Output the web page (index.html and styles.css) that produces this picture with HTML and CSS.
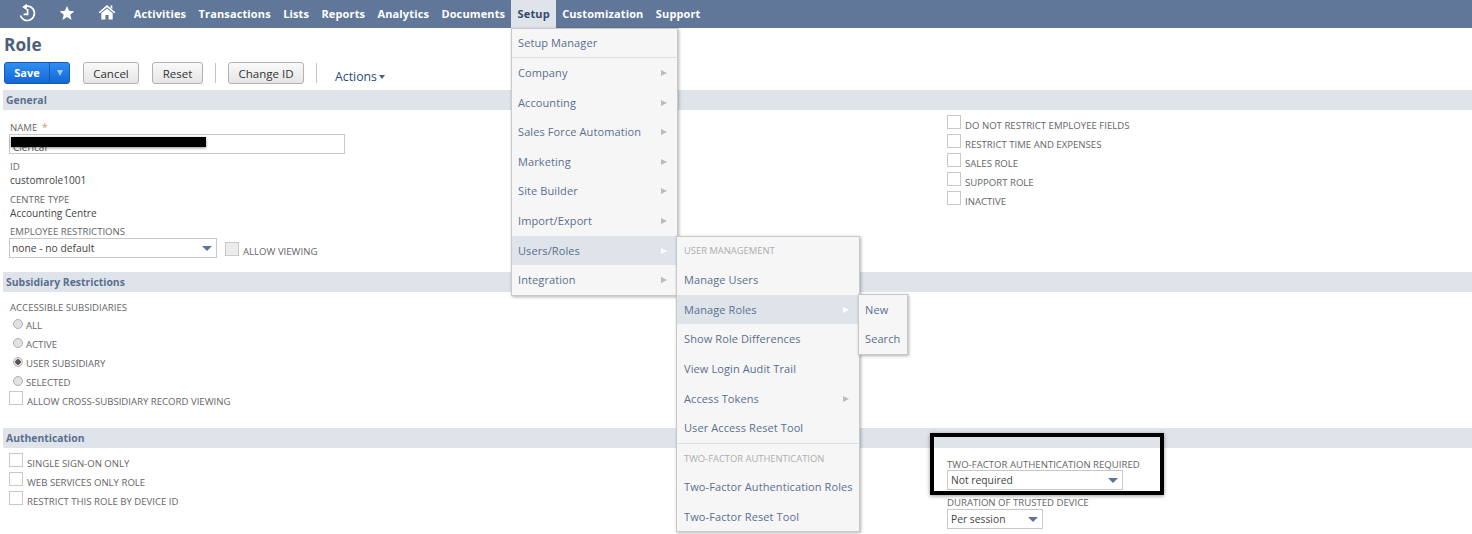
FILE: index.html
```html
<!DOCTYPE html>
<html lang="en">
  <head>
    <meta charset="UTF-8" />
    <title>Role</title>
    <link rel="stylesheet" href="styles.css">
  </head>
  <body>
    <nav class="topnav">
      <span class="nav-icon nav-icon-recent">
        <svg width="20" height="20" viewBox="0 0 20 20" fill="none" stroke="#fff" stroke-width="1.7">
          <path d="M9 3.2 A7.2 7.2 0 1 1 3.4 12.6" />
          <path d="M5.2 4 L9.8 .8 V7.2 Z" fill="#fff" stroke="none" />
          <path d="M10.6 6 V11.4 H6.6" />
        </svg>
      </span>
      <span class="nav-icon nav-icon-star">
        <svg width="16" height="16" viewBox="0 0 18 18"><path d="M9 1 L11.3 6.6 L17.2 7 L12.7 10.9 L14.1 16.8 L9 13.6 L3.9 16.8 L5.3 10.9 L.8 7 L6.7 6.6 Z" fill="#fff" /></svg>
      </span>
      <span class="nav-icon nav-icon-home">
        <svg width="18" height="16" viewBox="0 0 20 18" fill="#fff">
          <path d="M10 1 L19.4 9.2 L18 10.4 L10 3.6 L2 10.4 L.6 9.2 Z" />
          <path d="M14 1.6 H16 V5.6 L14 4 Z" />
          <path d="M3.6 10.4 L10 5 L16.4 10.4 V17.4 H11.8 V12.4 H8.2 V17.4 H3.6 Z" />
        </svg>
      </span>
      <a class="nav-link">Activities</a>
      <a class="nav-link">Transactions</a>
      <a class="nav-link">Lists</a>
      <a class="nav-link">Reports</a>
      <a class="nav-link">Analytics</a>
      <a class="nav-link">Documents</a>
      <a class="nav-link active">Setup</a>
      <a class="nav-link">Customization</a>
      <a class="nav-link">Support</a>
    </nav>

    <main class="page">
      <h1 class="page-title">Role</h1>

      <div class="toolbar">
        <div class="btn-save">
          <span class="btn-save-main">Save</span>
          <span class="btn-save-arrow"><i class="tri tri-light"></i></span>
        </div>
        <button class="btn btn-cancel">Cancel</button>
        <button class="btn btn-reset">Reset</button>
        <span class="sep sep-one"></span>
        <button class="btn btn-change">Change ID</button>
        <span class="sep sep-two"></span>
        <span class="actions">Actions<i class="tri tri-dark"></i></span>
      </div>

      <section class="section section-general">
        <h2 class="section-bar">General</h2>
        <div class="section-body">
          <div class="col-left">
            <div class="label">NAME <span class="req">*</span></div>
            <div class="text-input">Clerical</div>
            <div class="label label-id">ID</div>
            <div class="value">customrole1001</div>
            <div class="label label-centre">CENTRE TYPE</div>
            <div class="value">Accounting Centre</div>
            <div class="label label-emp">EMPLOYEE RESTRICTIONS</div>
            <div class="select-row">
              <div class="select select-emp">none - no default<i class="tri tri-select"></i></div>
              <span class="check check-filled"></span>
              <span class="label allow-label">ALLOW VIEWING</span>
            </div>
          </div>
          <div class="col-right">
            <div class="check-row"><span class="check"></span><span class="label">DO NOT RESTRICT EMPLOYEE FIELDS</span></div>
            <div class="check-row"><span class="check"></span><span class="label">RESTRICT TIME AND EXPENSES</span></div>
            <div class="check-row"><span class="check"></span><span class="label">SALES ROLE</span></div>
            <div class="check-row"><span class="check"></span><span class="label">SUPPORT ROLE</span></div>
            <div class="check-row"><span class="check"></span><span class="label">INACTIVE</span></div>
          </div>
        </div>
      </section>

      <section class="section section-subsidiary">
        <h2 class="section-bar">Subsidiary Restrictions</h2>
        <div class="section-body">
          <div class="col-left">
            <div class="label label-acc">ACCESSIBLE SUBSIDIARIES</div>
            <div class="radio-row"><span class="radio"></span><span class="label">ALL</span></div>
            <div class="radio-row"><span class="radio"></span><span class="label">ACTIVE</span></div>
            <div class="radio-row"><span class="radio radio-on"></span><span class="label">USER SUBSIDIARY</span></div>
            <div class="radio-row"><span class="radio"></span><span class="label">SELECTED</span></div>
            <div class="check-row"><span class="check"></span><span class="label">ALLOW CROSS-SUBSIDIARY RECORD VIEWING</span></div>
          </div>
        </div>
      </section>

      <section class="section section-auth">
        <h2 class="section-bar">Authentication</h2>
        <div class="section-body">
          <div class="col-left">
            <div class="check-row"><span class="check"></span><span class="label">SINGLE SIGN-ON ONLY</span></div>
            <div class="check-row"><span class="check"></span><span class="label">WEB SERVICES ONLY ROLE</span></div>
            <div class="check-row"><span class="check"></span><span class="label">RESTRICT THIS ROLE BY DEVICE ID</span></div>
          </div>
          <div class="col-right col-right-auth">
            <div class="label">TWO-FACTOR AUTHENTICATION REQUIRED</div>
            <div class="select select-two">Not required<i class="tri tri-select"></i></div>
            <div class="label label-dur">DURATION OF TRUSTED DEVICE</div>
            <div class="select select-dur">Per session<i class="tri tri-select"></i></div>
          </div>
        </div>
      </section>
    </main>

    <!-- things lying over the form -->
    <div class="redact"></div>
    <div class="highlight-box"></div>

    <ul class="menu menu-setup">
      <li class="menu-item first">Setup Manager</li>
      <li class="menu-rule"></li>
      <li class="menu-item more">Company</li>
      <li class="menu-item more">Accounting</li>
      <li class="menu-item more">Sales Force Automation</li>
      <li class="menu-item more">Marketing</li>
      <li class="menu-item more">Site Builder</li>
      <li class="menu-item more">Import/Export</li>
      <li class="menu-item more hover">Users/Roles</li>
      <li class="menu-item more">Integration</li>
    </ul>

    <ul class="menu menu-users">
      <li class="menu-head">USER MANAGEMENT</li>
      <li class="menu-item">Manage Users</li>
      <li class="menu-item more hover">Manage Roles</li>
      <li class="menu-item">Show Role Differences</li>
      <li class="menu-item">View Login Audit Trail</li>
      <li class="menu-item more">Access Tokens</li>
      <li class="menu-item">User Access Reset Tool</li>
      <li class="menu-rule"></li>
      <li class="menu-head menu-head-two">TWO-FACTOR AUTHENTICATION</li>
      <li class="menu-item">Two-Factor Authentication Roles</li>
      <li class="menu-item">Two-Factor Reset Tool</li>
    </ul>

    <ul class="menu menu-roles">
      <li class="menu-item">New</li>
      <li class="menu-item">Search</li>
    </ul>
  </body>
</html>
```

FILE: styles.css
```css
* {
  box-sizing: border-box;
}

body {
  margin: 0;
  height: 534px;
  overflow: hidden;
  position: relative;
  background: #fff;
  font-family: "Open Sans", sans-serif;
  color: #333;
}

/* top bar */
.topnav {
  display: flex;
  align-items: center;
  height: 28px;
  background: #607799;
  padding-left: 17px;
}

.nav-icon {
  display: flex;
  align-items: center;
  margin-top: -2px;
}

.nav-icon-recent {
  margin-right: 21px;
}

.nav-icon-star {
  margin: -3px 23px 0 1px;
}

.nav-icon-home {
  margin: -4px 11.6px 0 0;
}

.nav-link {
  font-size: 11px;
  font-weight: 700;
  letter-spacing: 0.13px;
  color: #fff;
  height: 28px;
  line-height: 27px;
  padding: 0 6.2px;
}

.nav-link.active {
  background: #dfe4eb;
  color: #344a68;
}

/* header */
.page-title {
  margin: 0;
  padding: 5px 0 0 4px;
  height: 34px;
  font-size: 17.3px;
  line-height: 24px;
  font-weight: 700;
  color: #4d5f79;
}

.toolbar {
  display: flex;
  align-items: flex-start;
  height: 28px;
  padding-left: 4px;
}

.btn-save {
  display: flex;
  width: 66px;
  height: 22px;
  border: 1px solid #125ab2;
  border-radius: 3px;
  background: linear-gradient(#2f8ef2, #1467d8);
  color: #fff;
  font-size: 11px;
  font-weight: 700;
  line-height: 20px;
}

.btn-save-main {
  width: 45px;
  text-align: center;
  border-right: 1px solid #125ab2;
}

.btn-save-arrow {
  flex: 1;
  display: flex;
  align-items: center;
  justify-content: center;
}

.tri {
  display: inline-block;
  width: 0;
  height: 0;
  border-style: solid;
  border-color: transparent;
}

.tri-light {
  border-width: 6px 3px 0;
  border-top-color: #a9c8ee;
}

.btn {
  height: 22px;
  border: 1px solid #b2b2b2;
  border-radius: 3px;
  background: linear-gradient(#fafafa, #e5e5e5);
  color: #333;
  font-family: inherit;
  font-size: 11.5px;
  font-weight: 400;
  padding: 0;
}

.btn-cancel {
  width: 56px;
  margin-left: 13px;
}

.btn-reset {
  width: 51px;
  margin-left: 13px;
}

.btn-change {
  width: 76px;
  margin-left: 12px;
}

.sep {
  width: 1px;
  height: 20px;
  background: #c4c4c4;
  margin-top: 1px;
}

.sep-one {
  margin-left: 12px;
}

.sep-two {
  margin-left: 12px;
}

.actions {
  margin-left: 18px;
  font-size: 12.3px;
  line-height: 30px;
  color: #2b4a75;
}

.tri-dark {
  border-width: 4px 3px 0;
  border-top-color: #4d5f79;
  margin-left: 2px;
  vertical-align: 2px;
}

/* sections */
.section-bar {
  margin: 0 0 0 3px;
  height: 20px;
  padding-left: 3px;
  background: #dfe4eb;
  color: #5a6f8f;
  font-size: 10.4px;
  font-weight: 700;
  line-height: 20px;
}

.section-general {
  height: 182px;
}

.section-subsidiary {
  height: 156px;
}

.section-body {
  display: grid;
  grid-template-columns: 947px 1fr;
}

.col-left {
  padding-left: 9px;
}

.col-left > .label,
.col-left > .value {
  margin-left: 1px;
}

.label {
  font-size: 9.6px;
  line-height: 13px;
  color: #666;
}

.req {
  color: #d0a060;
  font-size: 11px;
  margin-left: 2px;
}

.value {
  font-size: 10.1px;
  line-height: 14px;
  color: #444;
}

.section-general .col-left > .label:first-child {
  margin-top: 10px;
}

.text-input {
  width: 336px;
  height: 20px;
  border: 1px solid #c8c8c8;
  font-size: 10px;
  line-height: 24px;
  padding-left: 3px;
  color: #555;
  overflow: hidden;
}

.label-id {
  margin-top: 6px;
}

.label-centre {
  margin-top: 6px;
}

.label-emp {
  margin-top: 5px;
}

.select-row {
  display: flex;
  align-items: flex-start;
}

.select {
  position: relative;
  height: 20px;
  border: 1px solid #c8c8c8;
  font-size: 10.3px;
  line-height: 18px;
  padding-left: 3px;
  color: #444;
  background: #fff;
}

.select .tri-select {
  position: absolute;
  right: 4px;
  top: 7px;
}

.tri-select {
  border-width: 5px 5px 0;
  border-top-color: #5d7599;
}

.select-emp {
  width: 208px;
  padding-left: 2px;
}

.select-row .check {
  margin: 4px 0 0 8px;
  background: #ececec;
}

.allow-label {
  margin: 7px 0 0 4px;
}

.check {
  flex: none;
  display: block;
  width: 14px;
  height: 14px;
  border: 1px solid #c8c8c8;
  background: #fff;
}

.check-row {
  display: flex;
  align-items: flex-start;
  height: 19px;
}

.check-row .label {
  margin: 4px 0 0 4px;
}

.section-subsidiary .check-row {
  margin-top: -1px;
}

.col-right {
  padding-top: 5px;
}

.radio-row {
  display: flex;
  align-items: center;
  height: 19px;
  padding-left: 4px;
}

.radio-row .label {
  margin-left: 3px;
}

.radio {
  width: 10px;
  height: 10px;
  border-radius: 50%;
  border: 1px solid #b0b0b0;
  background: #e2e2e2;
  margin-top: -3px;
}

.radio-on {
  background: radial-gradient(circle, #555 0 2.5px, #e8e8e8 3px);
}

.label-acc {
  margin-top: 9px;
  margin-bottom: 2px;
}

.section-auth .col-left {
  padding-top: 5px;
}

.col-right-auth {
  padding-top: 10px;
}

.select-two {
  width: 176px;
  margin-top: -1px;
}

.label-dur {
  margin-top: 6px;
}

.select-dur {
  width: 96px;
}

/* overlays */
.redact {
  position: absolute;
  left: 11px;
  top: 137px;
  width: 195px;
  height: 10px;
  background: #000;
  box-shadow: 0 1px 3px rgba(0, 0, 0, 0.45);
}

.highlight-box {
  position: absolute;
  left: 930px;
  top: 433px;
  width: 234px;
  height: 62px;
  border: 4px solid #000;
  box-shadow: 0 1px 4px rgba(0, 0, 0, 0.4);
}

.menu {
  position: absolute;
  margin: 0;
  padding: 0;
  list-style: none;
  background: #f6f6f6;
  border: 1px solid #c9c9c9;
  box-shadow: 1px 1px 3px rgba(0, 0, 0, 0.3);
}

.menu-setup {
  left: 511px;
  top: 28px;
  width: 167px;
  height: 268px;
}

.menu-users {
  left: 676px;
  top: 236px;
  width: 184px;
  height: 296px;
}

.menu-roles {
  left: 858px;
  top: 294px;
  width: 50px;
  height: 61px;
}

.menu-item {
  position: relative;
  height: 29.6px;
  line-height: 29px;
  padding-left: 7px;
  font-size: 11px;
  letter-spacing: 0.1px;
  color: #5a6f8f;
  white-space: nowrap;
}

.menu-setup .menu-item {
  padding-left: 6px;
}

.menu-item.hover {
  background: #dfe4eb;
}

.menu-item.more::after {
  content: "";
  position: absolute;
  right: 10px;
  top: 12px;
  border-style: solid;
  border-color: transparent;
  border-width: 3px 0 3px 6px;
  border-left-color: #bcbcbc;
}

.menu-item.more.hover::after {
  border-left-color: #fff;
}

.menu-rule {
  height: 1px;
  background: #dfe0e6;
}

.menu-head {
  height: 28.3px;
  line-height: 27px;
  padding-left: 7px;
  font-size: 9.4px;
  color: #adadad;
}

.menu-head-two {
  height: 28.1px;
  line-height: 29px;
}

.menu-setup .first {
  height: 28px;
  line-height: 27px;
}

.menu-roles .menu-item {
  padding-left: 6px;
  height: 29px;
}
```
